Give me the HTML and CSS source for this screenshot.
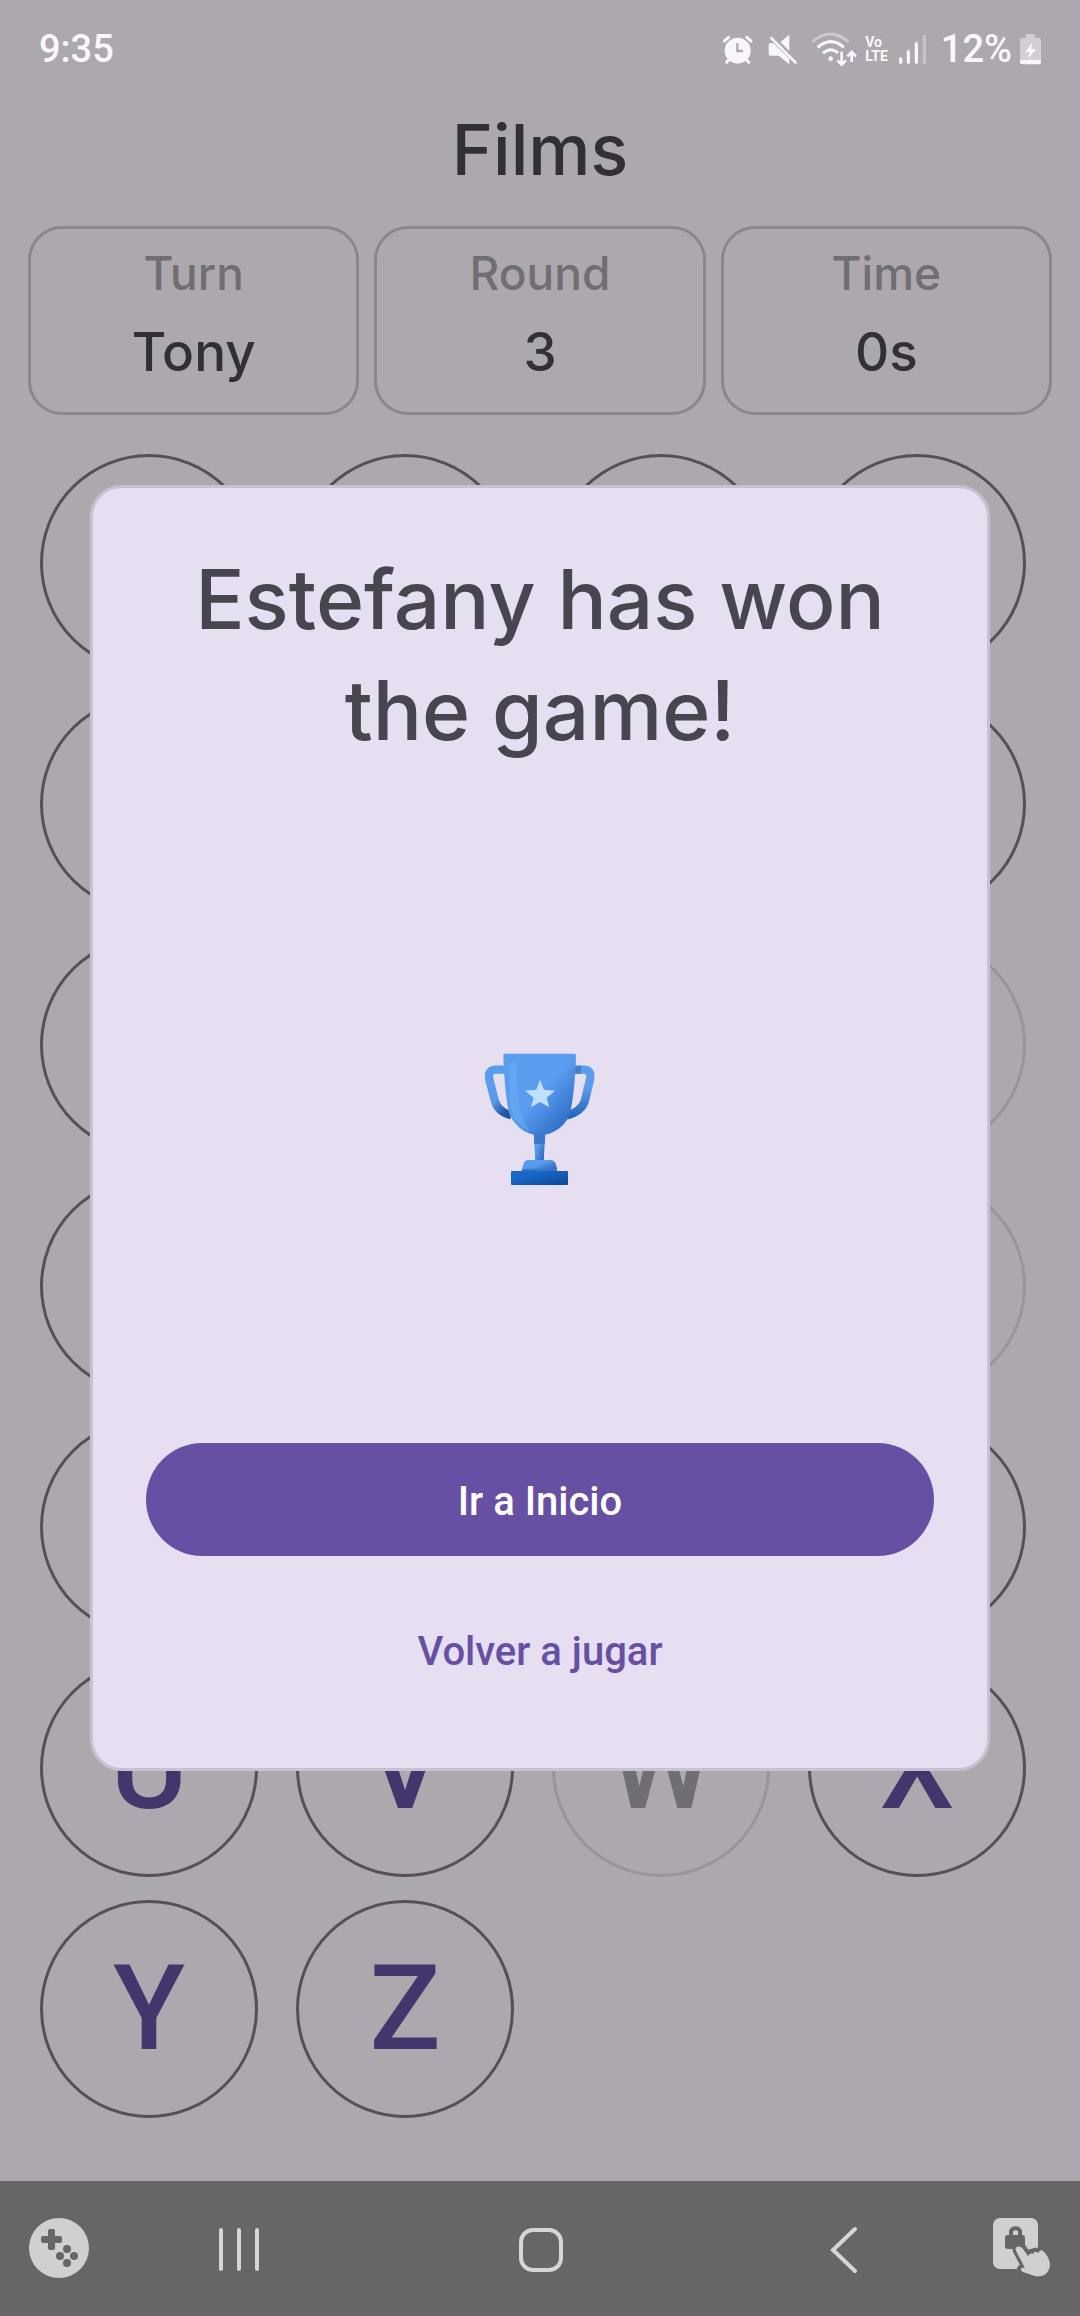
FILE: index.html
```html
<!DOCTYPE html>
<html lang="en">
<head>
<meta charset="utf-8">
<meta name="viewport" content="width=device-width, initial-scale=1">
<title>Films</title>
<link rel="stylesheet" href="styles.css">
</head>
<body>
<div class="screen">
  <header class="status">
    <span class="status-text">9:35</span>
    <div class="status-icons">
      <svg width="36" height="40" viewBox="60 27 108 120" aria-hidden="true">
        <g fill="none" stroke="currentColor" stroke-width="9" stroke-linecap="round"><path d="M70 63 83 52M150 63 137 52M82 121l-5 6M138 121l5 6"/></g>
        <circle cx="110" cy="92" r="39" fill="currentColor"/>
        <path d="M109 70V93H126" fill="none" stroke="#ada8ad" stroke-width="7"/>
      </svg>
      <svg width="36" height="40" viewBox="192 27 108 120" aria-hidden="true">
        <path d="M265 44V93L238 66ZM203 74q0-5 5-5H217L265 116V133L233 107H209q-6 0-6-6Z" fill="currentColor"/>
        <path d="M209 52 286 130" stroke="currentColor" stroke-width="8"/>
      </svg>
      <svg width="48" height="40" viewBox="324 27 144 120" aria-hidden="true">
        <g fill="none" stroke="currentColor" stroke-width="9">
          <path d="M334 66Q388 18 443 66" opacity=".4"/>
          <path d="M350 82Q389 48 429 82M366 100Q389 79 411 99"/>
          <path stroke-width="8" d="M422 95V133M409 121 422 134 435 121M452 126V96M439 109 452 96 465 109"/>
        </g>
        <circle cx="389" cy="116" r="7" fill="currentColor"/>
      </svg>
      <span class="volte">Vo<br>LTE</span>
      <svg width="37" height="40" viewBox="591 27 111 120" aria-hidden="true">
        <g stroke="currentColor" stroke-width="10" stroke-linecap="round"><path d="M605 117V127M628 95V127M652 71V127"/><path d="M676 50V127" opacity=".35"/></g>
      </svg>
      <span class="status-text">12%</span>
      <svg width="22" height="40" viewBox="960 27 66 120" aria-hidden="true">
        <path d="M977 53V46q0-4 4-4H1001q4 0 4 4V53H1016q7 0 7 7V119H960V60q0-7 7-7Z" fill="#d2ced4"/>
        <path d="M960 119H1023V127q0 6-6 6H966q-6 0-6-6ZM997 68 975 96H988L985 116 1008 87H994Z" fill="currentColor"/>
      </svg>
    </div>
  </header>

  <main class="game">
    <h1 class="category">Films</h1>
    <dl class="stats">
      <div class="stat"><dt>Turn</dt><dd>Tony</dd></div>
      <div class="stat"><dt>Round</dt><dd>3</dd></div>
      <div class="stat"><dt>Time</dt><dd>0s</dd></div>
    </dl>
    <div class="letters">
      <button class="letter" aria-label="A"></button><button class="letter" aria-label="B"></button><button class="letter" aria-label="C"></button><button class="letter" aria-label="D"></button>
      <button class="letter" aria-label="E"></button><button class="letter" aria-label="F"></button><button class="letter" aria-label="G"></button><button class="letter" aria-label="H"></button>
      <button class="letter" aria-label="I"></button><button class="letter" aria-label="J"></button><button class="letter" aria-label="K"></button><button class="letter" aria-label="L" disabled></button>
      <button class="letter" aria-label="M"></button><button class="letter" aria-label="N"></button><button class="letter" aria-label="O"></button><button class="letter" aria-label="P" disabled></button>
      <button class="letter" aria-label="Q"></button><button class="letter" aria-label="R"></button><button class="letter" aria-label="S"></button><button class="letter" aria-label="T"></button>
      <button class="letter">U</button><button class="letter">V</button><button class="letter" disabled>W</button><button class="letter">X</button>
      <button class="letter">Y</button><button class="letter">Z</button>
    </div>

    <div class="overlay">
      <section class="dialog" role="dialog" aria-labelledby="result">
        <h2 class="result" id="result">Estefany has won the game!</h2>
        <svg class="trophy" width="160" height="170" viewBox="0 0 480 510" aria-hidden="true">
          <defs>
            <linearGradient id="cup" x1="0" y1="0" x2="1" y2="1"><stop offset=".5" stop-color="#5a9cee"/><stop offset=".9" stop-color="#2a6bc4"/></linearGradient>
            <linearGradient id="handleLeft" x1="0" y1="0" x2=".6" y2="1"><stop offset=".6" stop-color="#5a9cec"/><stop offset="1" stop-color="#22569f"/></linearGradient>
            <linearGradient id="handleRight" x1="0" y1="0" x2="0" y2="1"><stop offset=".4" stop-color="#5a9cec"/><stop offset="1" stop-color="#2868bf"/></linearGradient>
            <linearGradient id="stem" x1="0" y1="0" x2="1" y2="1"><stop offset=".4" stop-color="#5a9cec"/><stop offset="1" stop-color="#1d5cb4"/></linearGradient>
            <linearGradient id="base" x1="0" y1="0" x2="1" y2="1"><stop offset=".3" stop-color="#1767c8"/><stop offset="1" stop-color="#0f4795"/></linearGradient>
          </defs>
          <path d="M140 119H108Q82 119 88 148L104 211Q112 245 154 256" fill="none" stroke="url(#handleLeft)" stroke-width="25"/>
          <path d="M340 119H370Q396 119 390 148L375 211Q365 245 320 256" fill="none" stroke="url(#handleRight)" stroke-width="25"/>
          <path d="M344 107H363V131H343Z" fill="#447fc9"/>
          <path d="M221 305H256L251 395H226Z" fill="url(#stem)"/>
          <path d="M221 305H256L254 342H223Z" fill="#3c78c8"/>
          <path d="M130 76q0-5 5-5H343q5 0 5 5Q344 190 330 250C318 290 276 316 239 316S160 290 146 244Q134 190 130 76Z" fill="url(#cup)"/>
          <path d="M147 98q0-3 3-3H165q5 0 5 5Q170 200 182 250Q190 280 210 303Q164 282 154 230Q148 190 147 98Z" fill="#6aabf7" opacity=".7"/>
          <path d="M240 149 252 179 285 182 260 203 268 232 240 216 213 232 221 203 195 182 229 179Z" fill="#c0e0ff"/>
          <path d="M185 424 190 403Q193 390 206 390H271Q284 390 288 403L292 424Z" fill="url(#stem)"/>
          <path d="M186 417H291V425H185Z" fill="#3975c2"/>
          <rect x="153" y="423" width="171" height="42" rx="3" fill="url(#base)"/>
        </svg>
        <div class="actions">
          <button class="action primary">Ir a Inicio</button>
          <button class="action">Volver a jugar</button>
        </div>
      </section>
    </div>
  </main>

  <nav class="system-nav" aria-label="System">
    <button class="nav-button" aria-label="Game tools">
      <svg width="60" height="60" viewBox="0 0 60 60"><circle cx="30" cy="30" r="30" fill="#d0cfd1"/><g fill="#676567"><rect x="19" y="11" width="7" height="21" rx="2"/><rect x="12" y="18" width="21" height="7" rx="2"/><circle cx="38" cy="31" r="4"/><circle cx="31" cy="38" r="4"/><circle cx="45" cy="38" r="4"/><circle cx="38" cy="45" r="4"/></g></svg>
    </button>
    <button class="nav-button" aria-label="Recent apps">
      <svg width="60" height="60" viewBox="0 0 60 60"><path d="M12 12V51M30 12V51M48 12V51" stroke="#d8d5da" stroke-width="4" stroke-linecap="round"/></svg>
    </button>
    <button class="nav-button" aria-label="Home">
      <svg width="60" height="60" viewBox="0 0 60 60"><rect x="10" y="12" width="40" height="40" rx="12" fill="none" stroke="#d8d5da" stroke-width="4"/></svg>
    </button>
    <button class="nav-button" aria-label="Back">
      <svg width="60" height="60" viewBox="0 0 60 60"><path d="M41 11 19 32 41 53" fill="none" stroke="#d8d5da" stroke-width="4" stroke-linecap="round"/></svg>
    </button>
    <button class="nav-button" aria-label="Touch lock">
      <svg width="60" height="60" viewBox="0 0 60 60">
        <rect x="0" y="0" width="45" height="51" rx="7" fill="#d0cfd1"/>
        <path d="M18 20V13a5 5 0 0 1 9 0V20" fill="none" stroke="#676567" stroke-width="4"/>
        <rect x="12" y="17" width="20" height="14" rx="3" fill="#676567"/>
        <path d="M24 33C22 28 28 27 30 31L35 38Q38 33 40 36 42 32 45 35 48 30 51 34C56 39 57 44 57 48 55 58 48 59 42 58L30 54C26 52 28 49 33 50Z" fill="#676567" stroke="#676567" stroke-width="8" stroke-linejoin="round"/>
        <path d="M23 33C21 28 27 27 30 31L35 38Q38 34 40 36 42 32 45 35 48 30 51 34C56 39 57 44 57 48 55 58 48 59 42 58L30 54C26 52 28 49 32 50Z" fill="#d0cfd1"/>
      </svg>
    </button>
  </nav>
</div>
</body>
</html>
```
FILE: styles.css
```css
* { box-sizing: border-box; }

body {
  margin: 0;
  background: #ada8ad;
  color: #323036;
  font-family: Inter, "Open Sans", sans-serif;
  font-weight: 500;
}

button {
  margin: 0;
  padding: 0;
  border: 0;
  background: none;
  font: inherit;
}

svg { display: block; }

.screen {
  display: flex;
  flex-direction: column;
  min-height: 100vh;
}

.status {
  display: flex;
  align-items: center;
  justify-content: space-between;
  height: 75px;
  padding: 22px 38px 0 39px;
  color: #faf7fc;
  font-family: Roboto, sans-serif;
}

.status-icons {
  display: flex;
  align-items: center;
  gap: 8px;
}

.status-text {
  font-size: 38px;
  line-height: 48px;
}

.volte {
  font-size: 14px;
  font-weight: 700;
  line-height: 14px;
}

.game {
  position: relative;
  flex: 1;
}

.category {
  margin: 0;
  padding: 27px 0 28px;
  font-size: 70px;
  font-weight: 500;
  line-height: 96px;
  text-align: center;
}

.stats {
  display: grid;
  grid-template-columns: repeat(3, 1fr);
  gap: 15px;
  margin: 0;
  padding: 0 28px;
}

.stat {
  padding: 11px 0 17px;
  border: 3px solid #8a868c;
  border-radius: 34px;
  text-align: center;
}

.stat dt {
  color: #716e73;
  font-size: 46px;
  line-height: 66px;
}

.stat dd {
  margin: 3px 0 0;
  font-size: 53px;
  line-height: 86px;
}

.letters {
  display: grid;
  grid-template-columns: repeat(4, 1fr);
  gap: 23px 38px;
  padding: 39px 54px 60px 40px;
}

.letter {
  aspect-ratio: 1;
  border: 3px solid #535057;
  border-radius: 50%;
  color: #44366d;
  font-family: Roboto, sans-serif;
  font-size: 118px;
  line-height: 138px;
}

.letter:disabled {
  border-color: #98949a;
  color: #706e72;
}

.overlay {
  position: absolute;
  inset: 0;
  display: flex;
  align-items: center;
  padding: 0 90px;
}

.dialog {
  display: flex;
  flex-direction: column;
  align-items: center;
  width: 100%;
  padding: 56px 53px 62px;
  border: 3px solid #c8c2d0;
  border-radius: 32px;
  background: #e6def1;
}

.result {
  margin: 0;
  color: #49454f;
  font-size: 82px;
  font-weight: 500;
  line-height: 111px;
  text-align: center;
}

.trophy { margin: 264px 0 243px; }

.actions {
  display: flex;
  flex-direction: column;
  gap: 37px;
  width: 100%;
}

.action {
  height: 113px;
  padding-top: 4px;
  border-radius: 57px;
  color: #674fa3;
  font-family: Roboto, sans-serif;
  font-size: 40px;
  line-height: 48px;
}

.primary {
  background: #674fa3;
  color: #fff;
}

.system-nav {
  display: grid;
  grid-template-columns: 118fr 242fr 362fr 244fr 114fr;
  align-items: center;
  height: 135px;
  padding-bottom: 2px;
  background: #676567;
}

.nav-button { justify-self: center; }
```
